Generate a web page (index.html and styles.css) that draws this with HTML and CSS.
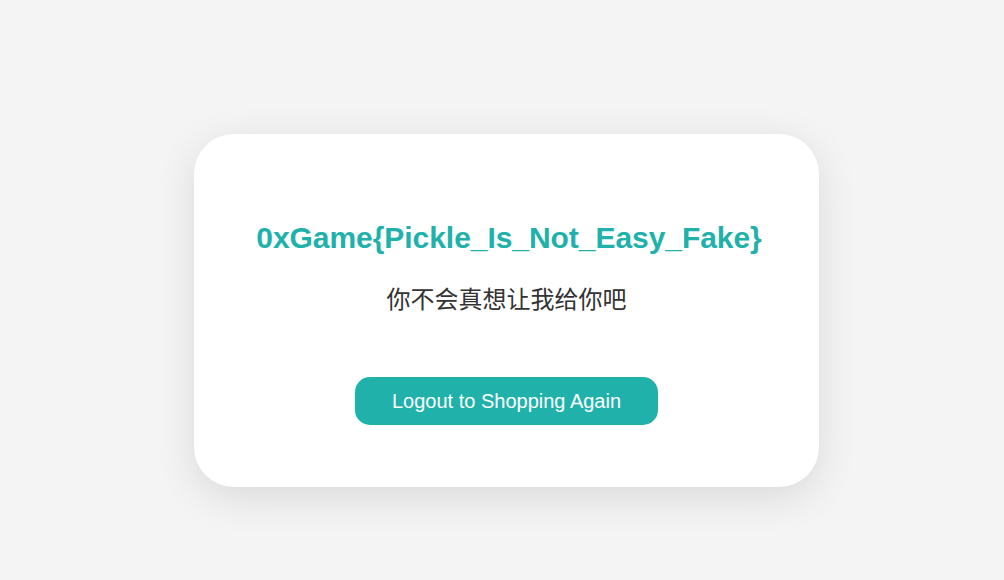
FILE: index.html
```html
<!DOCTYPE html>
<html lang="zh">
<head>
<meta charset="utf-8">
<title>0xGame</title>
<link rel="stylesheet" href="styles.css">
</head>
<body>
<div class="page">
  <div class="card">
    <h1 class="flag">0xGame{Pickle_Is_Not_Easy_Fake}</h1>
    <p class="msg">你不会真想让我给你吧</p>
    <div class="actions">
      <button class="btn">Logout to Shopping Again</button>
    </div>
  </div>
</div>
</body>
</html>
```

FILE: styles.css
```css
html, body {
  margin: 0;
  padding: 0;
  background: #f4f4f4;
  font-family: "Liberation Sans", Arial, "Noto Sans CJK SC", sans-serif;
}

.page {
  display: flex;
  justify-content: center;
  align-items: flex-start;
  padding: 134px 0 0 9px;
  min-height: 580px;
  box-sizing: border-box;
}

.card {
  width: 625px;
  box-sizing: border-box;
  background: #ffffff;
  border-radius: 40px;
  box-shadow: 0 10px 40px rgba(0, 0, 0, 0.11);
  padding: 86px 40px 62px;
  text-align: center;
}

.flag {
  margin: 0;
  padding-left: 5px;
  font-size: 30px;
  line-height: 36px;
  font-weight: bold;
  color: #20b2aa;
  white-space: nowrap;
  letter-spacing: -0.05px;
}

.msg {
  margin: 28px 0 0;
  font-size: 24px;
  line-height: 32px;
  color: #333333;
  font-family: "Liberation Sans", "Noto Sans CJK SC", sans-serif;
}

.actions {
  margin-top: 61px;
}

.btn {
  display: inline-block;
  border: none;
  background: #20b2aa;
  color: #ffffff;
  font-family: "Liberation Sans", Arial, sans-serif;
  font-size: 20px;
  line-height: 24px;
  padding: 12px 37px;
  border-radius: 15px;
  cursor: pointer;
}
```
